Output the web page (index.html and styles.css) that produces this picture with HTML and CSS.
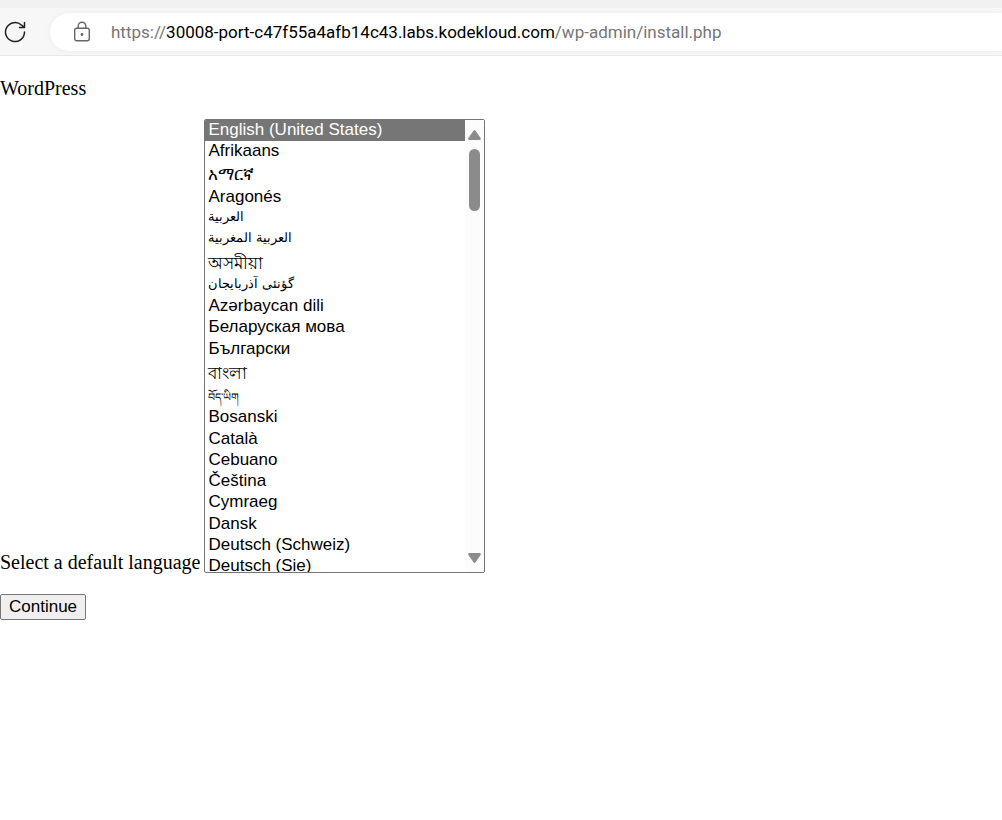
FILE: index.html
```
<!DOCTYPE html>
<html lang="en">
<head>
<meta charset="utf-8">
<title>WordPress › Installation</title>
<link rel="stylesheet" href="styles.css">
</head>
<body>
<header class="toolbar">
  <button class="reload" type="button" aria-label="Reload">
    <svg width="24" height="24" viewBox="0 0 24 24" fill="none" stroke="#222" stroke-width="1.5" stroke-linecap="round" stroke-linejoin="round"><path d="M21.5 12A9.5 9.5 0 1 1 18.6 5.2L21.5 7.5M21.5 2.5V7.5H16.5"/></svg>
  </button>
  <div class="address">
    <svg class="lock" width="18" height="22" viewBox="0 0 18 22" fill="none" stroke="#666" stroke-width="1.4"><rect x="1.7" y="7.2" width="14.6" height="12.6" rx="2"/><path d="M5.2 7V5a3.8 3.8 0 0 1 7.6 0v2"/><circle cx="9" cy="13.5" r="1.4" fill="#666" stroke="none"/></svg>
    <div class="url">https://<span class="host">30008-port-c47f55a4afb14c43.labs.kodekloud.com</span>/wp-admin/install.php</div>
  </div>
</header>
<main class="page">
  <p class="brand">WordPress</p>
  <form class="setup">
    <div class="field">
      <label for="language">Select a default language</label>
      <div class="listbox">
        <select id="language" size="21">
          <option class="current">English (United States)</option>
          <option>Afrikaans</option>
          <option class="tall ethiopic">አማርኛ</option>
          <option>Aragonés</option>
          <option class="arabic">العربية</option>
          <option class="arabic">العربية المغربية</option>
          <option class="tall indic">অসমীয়া</option>
          <option class="arabic">گؤنئی آذربایجان</option>
          <option>Azərbaycan dili</option>
          <option class="loose">Беларуская мова</option>
          <option>Български</option>
          <option class="tall indic">বাংলা</option>
          <option class="loose tibetan">བོད་ཡིག</option>
          <option class="loose">Bosanski</option>
          <option>Català</option>
          <option>Cebuano</option>
          <option>Čeština</option>
          <option class="loose">Cymraeg</option>
          <option>Dansk</option>
          <option>Deutsch (Schweiz)</option>
          <option>Deutsch (Sie)</option>
        </select>
        <div class="scrollbar" aria-hidden="true">
          <svg width="13" height="10" viewBox="0 0 13 10"><path d="M5.5.7Q6.5-.5 7.5.7L12.6 8Q13.2 10 11.7 10H1.3Q-.2 10 .4 8Z"/></svg>
          <span class="thumb"></span>
          <svg class="down" width="13" height="10" viewBox="0 0 13 10"><path d="M5.5 9.3Q6.5 10.5 7.5 9.3L12.6 2Q13.2 0 11.7 0H1.3Q-.2 0 .4 2Z"/></svg>
        </div>
      </div>
    </div>
    <button class="continue" type="button">Continue</button>
  </form>
</main>
</body>
</html>
```
FILE: styles.css
```
* { box-sizing: border-box; }
body {
  margin: 0;
  background: #fff;
  color: #000;
  font: 20px/22px "Liberation Serif", serif;
}
.toolbar {
  display: flex;
  align-items: center;
  gap: 23px;
  height: 56px;
  padding: 8px 0 0 3px;
  background: linear-gradient(#f1f1f1 8px, #f7f7f7 8px);
  border-bottom: 1px solid #e8e8e8;
}
.reload {
  display: flex;
  padding: 0;
  border: 0;
  background: none;
}
.address {
  flex: 1;
  display: flex;
  align-items: center;
  gap: 20px;
  height: 38px;
  padding-left: 23px;
  border-radius: 19px 0 0 19px;
  background: #fff;
  box-shadow: 0 0 4px #e8e8e8;
}
.url {
  color: #767676;
  font: 17px/24px Roboto, sans-serif;
  white-space: nowrap;
}
.host { color: #000; }
.page { padding-top: 21px; }
.brand { margin: 0 0 20px; }
.field {
  display: flex;
  align-items: flex-end;
  gap: 4px;
}
.listbox { position: relative; }
select {
  display: block;
  width: 281px;
  height: 454px;
  padding: 0;
  border: 1px solid #767676;
  border-radius: 2px;
  outline: 0;
  background: #fff;
  color: #000;
  font: 17px "Liberation Sans", "Noto Sans", sans-serif;
  overflow: hidden;
  scrollbar-width: none;
}
option {
  height: 21px;
  min-height: 0;
  padding: 0 3px;
}
.current { background: #767676; color: #fff; }
.loose { height: 22px; }
.tall { height: 25px; }
.ethiopic { padding-top: 3px; }
.arabic { padding-top: 1px; font-size: 13px; }
.indic { font-size: 17px; }
.tibetan { font-size: 11px; }
.scrollbar {
  position: absolute;
  inset: 1px 1px 1px auto;
  display: flex;
  flex-direction: column;
  align-items: center;
  width: 19px;
  padding: 10px 0 9px;
  background: #fcfcfc;
  fill: #8b8b8b;
}
.thumb {
  width: 11px;
  height: 62px;
  margin-top: 9px;
  border-radius: 6px;
  background: #8b8b8b;
}
.down { margin-top: auto; }
.continue {
  display: block;
  height: 26px;
  margin-top: 21px;
  padding: 0 8px;
  border: 1px solid #767676;
  border-radius: 2px;
  background: #efefef;
  color: #000;
  font: 17px/22px "Liberation Sans", sans-serif;
}
```
